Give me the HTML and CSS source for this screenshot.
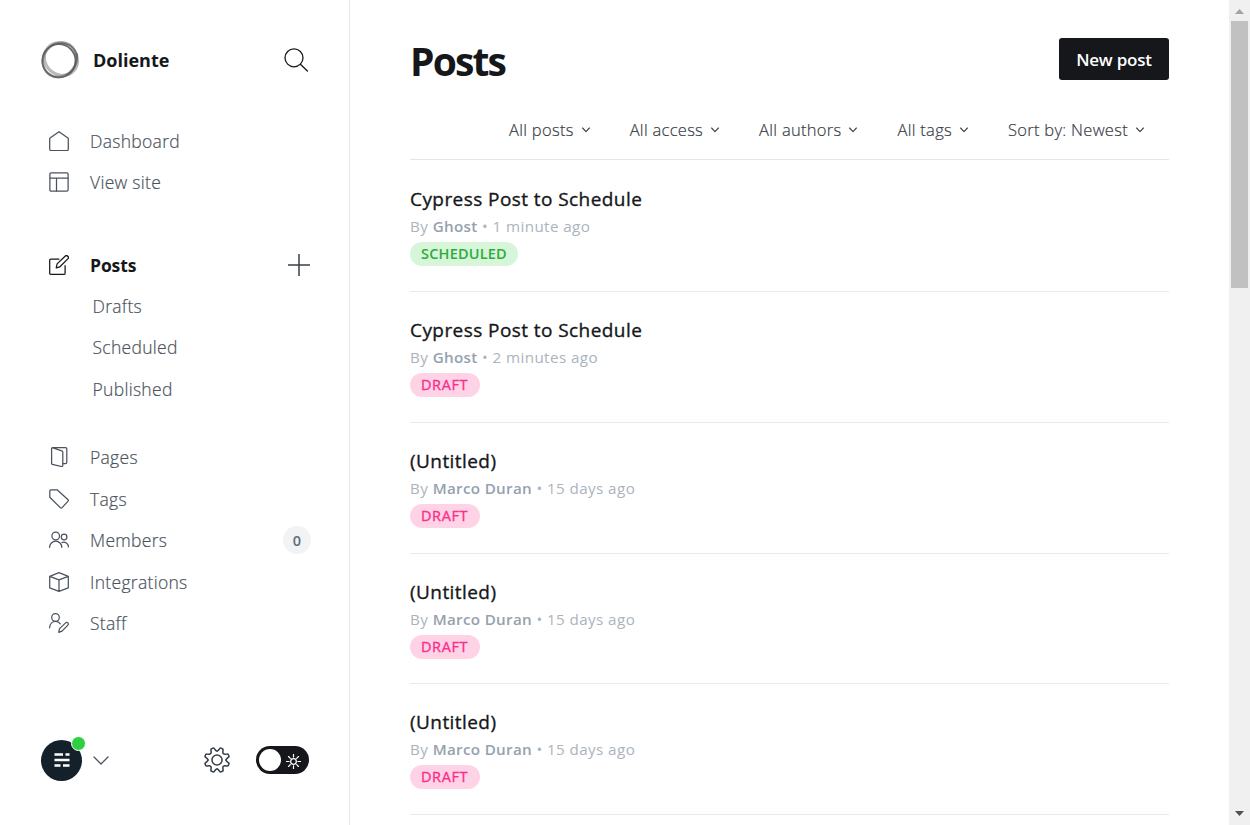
FILE: index.html
```html
<!DOCTYPE html>
<html lang="en">
<head>
<meta charset="utf-8">
<title>Posts - Doliente</title>
<link rel="stylesheet" href="styles.css">
</head>
<body>
<div class="app">
  <aside class="sidebar">
    <header class="brand">
      <svg class="logo" viewBox="0 0 40 40" fill="none">
        <circle cx="18.900" cy="20.800" r="16.600" stroke="#3c3c3c" stroke-width="1.700" opacity=".8"/>
        <ellipse cx="20.200" cy="18.800" rx="17.300" ry="15.500" stroke="#777" stroke-width="3.200" opacity=".5" transform="rotate(40 20 20)"/>
        <ellipse cx="20" cy="19.600" rx="18" ry="16" stroke="#666" stroke-width="2.400" opacity=".6" transform="rotate(-50 20 20)"/>
        <path d="M3 15C6 5 19 1 29 5c4 2 8 7 7.500 12" stroke="#555" stroke-width="1" opacity=".8"/>
        <path d="M37 14c1 9-3 18-11 21" stroke="#555" stroke-width="1.800" opacity=".6"/>
      </svg>
      <span class="brand-name">Doliente</span>
      <svg class="search" viewBox="0 0 24 24"><circle cx="10" cy="9.800" r="9"/><path d="M16.400 16.200 23.400 23"/></svg>
    </header>

    <nav class="nav">
      <ul class="group">
        <li class="item"><svg class="icon" viewBox="0 0 20 20"><path d="M.7 7.300 10 .7l9.300 6.600v11a1.200 1.200 0 0 1-1.200 1.200H1.900A1.200 1.200 0 0 1 .7 18.300z"/></svg><span>Dashboard</span></li>
        <li class="item"><svg class="icon" viewBox="0 0 20 20"><rect x=".9" y=".9" width="18.200" height="18.200" rx="1.200"/><path d="M1 6h18M7.500 6v13"/></svg><span>View site</span></li>
      </ul>
      <ul class="group">
        <li class="item active"><svg class="icon" viewBox="0 0 20 20"><path d="M10 4H1.900A1.200 1.200 0 0 0 .7 5.200v13a1.200 1.200 0 0 0 1.200 1.200h13a1.200 1.200 0 0 0 1.200-1.200V10.500M7.200 12.800l.9-3.900 8-7.700a1.900 1.900 0 0 1 2.700 2.700l-7.900 7.900z"/></svg><span>Posts</span><svg class="plus" viewBox="0 0 22 22"><path d="M0 11h22M11 0v22"/></svg></li>
        <li class="item sub">Drafts</li>
        <li class="item sub">Scheduled</li>
        <li class="item sub">Published</li>
      </ul>
      <ul class="group">
        <li class="item"><svg class="icon" viewBox="0 0 20 20"><path d="M2.600 1.200v15.200a1 1 0 0 0 .8 1l9.200 2.100a1 1 0 0 0 1.200-1V5.300a1.500 1.500 0 0 0-1-1.400L3.300.7H16.500a1.300 1.300 0 0 1 1.300 1.300v13.200a1.300 1.300 0 0 1-1.300 1.300h-2.600"/></svg><span>Pages</span></li>
        <li class="item"><svg class="icon" viewBox="0 0 20 20"><path d="M1.900.8h6.200l11 10a.9.9 0 0 1 0 1.300l-6.300 6.800a.9.9 0 0 1-1.300 0L.8 8.200V1.900A1.100 1.100 0 0 1 1.900.8z"/></svg><span>Tags</span></li>
        <li class="item"><svg class="icon" viewBox="0 0 20 20"><circle cx="6.700" cy="6" r="3.800"/><circle cx="15.100" cy="7" r="2.800"/><path d="M.6 17.300a6.100 6.100 0 0 1 12.200 0M13 12.600a4.700 4.700 0 0 1 6.500 4.300"/></svg><span>Members</span><b class="count">0</b></li>
        <li class="item"><svg class="icon" viewBox="0 0 20 20"><path d="m10 .7 9.300 3.600v11.500L10 19.300.7 15.800V4.300zM.7 4.300 10 7.900l9.300-3.600M10 7.900v11.400"/></svg><span>Integrations</span></li>
        <li class="item"><svg class="icon" viewBox="0 0 20 20"><circle cx="6.500" cy="4.500" r="3.800"/><path d="M.6 14.800c.2-3.700 2.700-6.500 6-6.500 2 0 3.700 1 4.700 2.500M9.700 19.300l.9-3.700 6-5.700a1.500 1.500 0 0 1 2.300 2.200l-5.900 6z"/></svg><span>Staff</span></li>
      </ul>
    </nav>

    <footer class="account">
      <span class="avatar"><svg viewBox="0 0 16 14"><path d="M.5 1.500h8.500M11.500 1.500h4M.5 7h15M.5 12.500h6M9 12.500h6.500"/></svg><i class="status"></i></span>
      <svg class="caret" viewBox="0 0 16 9"><path d="m1 1 7 7 7-7"/></svg>
      <svg class="gear" viewBox="-13.500 -13.500 27 27">
        <path id="quarter" d="M0-9.400Q.8-9.400 1.200-9.900L2.900-12Q3.400-12.700 4.200-12.350L5.600-11.750Q6.400-11.400 6.300-10.600L6.050-8Q6-7.200 6.650-6.650 7.200-6 8-6.050L10.600-6.300Q11.400-6.400 11.750-5.600L12.350-4.200Q12.700-3.400 12-2.900L9.900-1.200Q9.400-.8 9.400 0"/>
        <use href="#quarter" transform="rotate(90)"/><use href="#quarter" transform="rotate(180)"/><use href="#quarter" transform="rotate(270)"/>
        <circle r="5.200"/>
      </svg>
      <span class="toggle"><i class="knob"></i><svg viewBox="0 0 16 16"><circle cx="8" cy="8" r="3"/><path d="M8 .5v2.800M8 12.700v2.800M.5 8h2.800M12.700 8h2.800M2.700 2.700l1.900 1.900M11.400 11.400l1.900 1.900M2.700 13.300l1.900-1.900M11.400 4.600l1.900-1.900"/></svg></span>
    </footer>
  </aside>

  <main class="content">
    <header class="top"><h1>Posts</h1><button class="new">New post</button></header>
    <div class="filters">
      <span>All posts<svg viewBox="0 0 8 6"><path d="m.6 1 3.400 3.600L7.400 1"/></svg></span>
      <span>All access<svg viewBox="0 0 8 6"><path d="m.6 1 3.400 3.600L7.400 1"/></svg></span>
      <span>All authors<svg viewBox="0 0 8 6"><path d="m.6 1 3.400 3.600L7.400 1"/></svg></span>
      <span>All tags<svg viewBox="0 0 8 6"><path d="m.6 1 3.400 3.600L7.400 1"/></svg></span>
      <span>Sort by: Newest<svg viewBox="0 0 8 6"><path d="m.6 1 3.400 3.600L7.400 1"/></svg></span>
    </div>
    <section class="posts">
      <article class="post"><h3>Cypress Post to Schedule</h3><p>By <b>Ghost</b> • 1 minute ago</p><span class="badge scheduled">SCHEDULED</span></article>
      <article class="post"><h3>Cypress Post to Schedule</h3><p>By <b>Ghost</b> • 2 minutes ago</p><span class="badge">DRAFT</span></article>
      <article class="post"><h3>(Untitled)</h3><p>By <b>Marco Duran</b> • 15 days ago</p><span class="badge">DRAFT</span></article>
      <article class="post"><h3>(Untitled)</h3><p>By <b>Marco Duran</b> • 15 days ago</p><span class="badge">DRAFT</span></article>
      <article class="post"><h3>(Untitled)</h3><p>By <b>Marco Duran</b> • 15 days ago</p><span class="badge">DRAFT</span></article>
    </section>
  </main>

  <div class="scrollbar">
    <svg class="arrow" viewBox="0 0 9 5"><path d="M0 5h9L4.500 0z" fill="#a3a3a3"/></svg>
    <i class="thumb"></i>
    <svg class="arrow down" viewBox="0 0 9 5"><path d="M0 0h9L4.500 5z" fill="#505050"/></svg>
  </div>
</div>
</body>
</html>
```
FILE: styles.css
```css
* { box-sizing: border-box; margin: 0; padding: 0; }
body { height: 825px; overflow: hidden; background: #fff; color: #15171a; font-family: "Open Sans", "Noto Sans", sans-serif; }
svg { flex: none; fill: none; stroke: currentColor; stroke-linecap: round; stroke-linejoin: round; }
ul { list-style: none; }
.app { display: flex; height: 825px; }

.sidebar { display: flex; flex-direction: column; width: 350px; border-right: 1px solid #e6e9eb; color: #4a535d; }
.brand { display: flex; align-items: center; height: 120px; padding: 0 41px 0 40px; color: #15171a; }
.logo { width: 40px; height: 40px; stroke: none; }
.brand-name { flex: 1; margin-left: 13px; font-size: 18px; font-weight: 700; }
.search { width: 24px; height: 24px; stroke-width: 1.300; }
.group { margin-bottom: 41px; }
.group + .group { margin-bottom: 27px; }
.item { display: flex; align-items: center; height: 41.450px; padding: 0 38px 0 49px; font-size: 17.500px; font-weight: 300; letter-spacing: .3px; -webkit-text-stroke: .2px currentColor; }
.icon { width: 20px; height: 20px; margin-right: 21px; stroke-width: 1.250; }
.active { color: #15171a; font-weight: 700; letter-spacing: -.1px; -webkit-text-stroke: 0; }
.plus { width: 22px; height: 22px; margin-left: auto; margin-right: 1px; stroke-width: 1.500; color: #394047; }
.sub { padding-left: 92.500px; }
.count { display: flex; align-items: center; justify-content: center; width: 28px; height: 28px; margin-left: auto; border-radius: 50%; background: #f1f3f4; font-size: 14.500px; font-weight: 600; color: #626d79; -webkit-text-stroke: 0; }
.account { display: flex; align-items: center; height: 42px; margin-top: auto; margin-bottom: 44px; padding: 0 40px 0 41px; }
.avatar { position: relative; display: flex; align-items: center; justify-content: center; width: 41px; height: 41px; border-radius: 50%; background: #15212a; color: #fff; }
.avatar svg { width: 16px; height: 14px; stroke-width: 2.600; stroke-linecap: butt; }
.status { position: absolute; top: -4px; right: -4px; width: 15px; height: 15px; border: 1px solid #fff; border-radius: 50%; background: #30cf43; }
.caret { width: 16px; height: 9px; margin-left: 10.500px; stroke-width: 1.300; }
.gear { width: 26px; height: 26px; margin-left: auto; margin-right: 26.500px; stroke-width: 1.600; color: #394047; }
.toggle { display: flex; align-items: center; justify-content: space-between; width: 53px; height: 28px; padding: 0 8px 0 3px; border-radius: 14px; background: #15171a; color: #fff; }
.toggle svg { width: 15px; height: 15px; margin-top: 2px; stroke-width: 1.300; }
.knob { width: 22px; height: 22px; border-radius: 50%; background: #fff; }

.content { width: 879px; padding: 38px 60px 0; }
.top { display: flex; justify-content: space-between; height: 63px; }
h1 { margin-top: -1px; font-size: 39px; line-height: 48px; font-weight: 700; letter-spacing: -1.850px; }
.new { width: 110px; height: 42px; border: 0; border-radius: 3px; background: #15171a; color: #fff; font: 600 17px "Open Sans", sans-serif; letter-spacing: -.2px; }
.filters { display: flex; justify-content: flex-end; align-items: center; gap: 40px; height: 59px; padding: 0 25px 2px 0; border-bottom: 1px solid #e3e5e8; color: #394047; font-size: 16.500px; font-weight: 300; letter-spacing: .29px; -webkit-text-stroke: .2px currentColor; }
.filters span { display: flex; align-items: center; white-space: nowrap; }
.filters svg { width: 8px; height: 6px; margin: 2px 0 0 8px; stroke-width: 1.100; }
.posts { display: flex; flex-direction: column; }
.post { height: 130.800px; padding-top: 25px; border-bottom: 1px solid #e6e9ee; }
.post:first-child { height: 132px; padding-top: 26px; }
h3 { font-size: 19px; line-height: 27px; font-weight: 400; letter-spacing: .43px; -webkit-text-stroke: .35px currentColor; }
.post p { line-height: 27px; font-size: 15.200px; font-weight: 400; color: #abb4be; letter-spacing: .42px; }
.post b { font-weight: 600; color: #95a1ad; letter-spacing: .32px; }
.badge { display: flex; align-items: center; width: 70px; height: 24px; margin-top: 2px; padding: 0 0 1px 11px; border-radius: 12px; background: #ffd3e6; color: #fb2d8d; font-size: 14.500px; font-weight: 400; letter-spacing: .6px; -webkit-text-stroke: .35px currentColor; }
.scheduled { padding-bottom: 2px; width: 108px; background: #d6f5d9; color: #2dab3c; font-weight: 600; letter-spacing: .2px; -webkit-text-stroke: 0; }

.scrollbar { display: flex; flex-direction: column; align-items: center; width: 21px; padding: 9px 0; background: #f0f0f0; }
.arrow { width: 9px; height: 5px; stroke: none; }
.thumb { width: 17px; height: 267px; margin-top: 7px; background: #c1c1c1; }
.down { margin-top: auto; }
```
